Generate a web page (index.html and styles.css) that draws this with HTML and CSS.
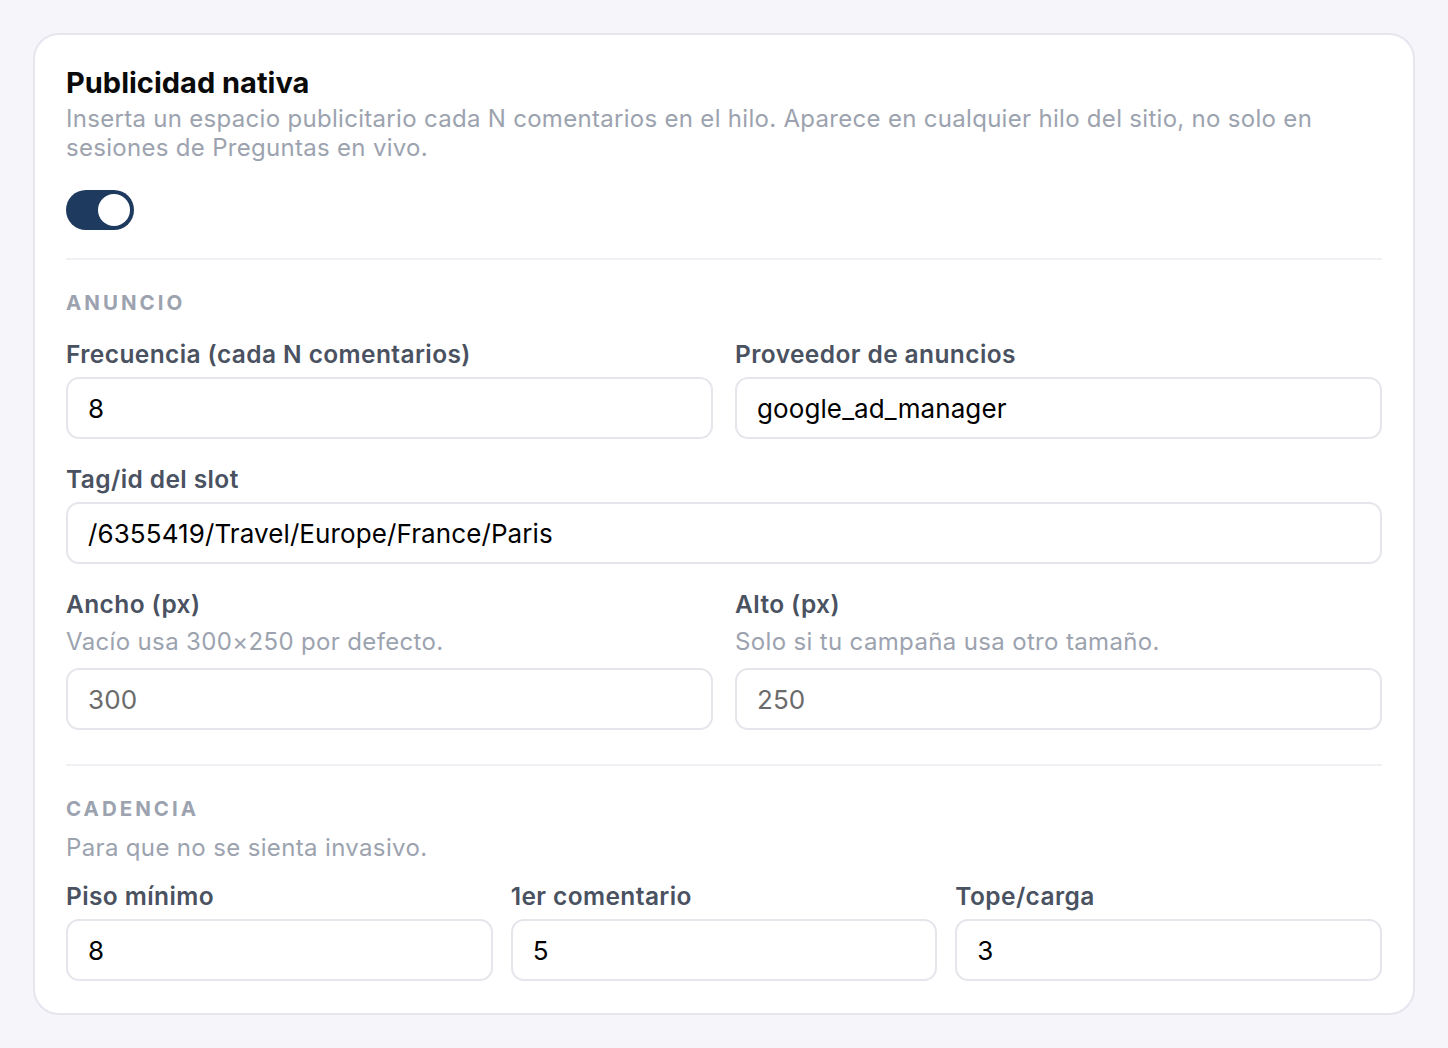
FILE: index.html
```html
<!DOCTYPE html>
<html lang="es">
<head>
<meta charset="utf-8">
<title>Publicidad nativa</title>
<link rel="stylesheet" href="styles.css">
</head>
<body>
<div class="card">
  <h1 class="title">Publicidad nativa</h1>
  <p class="desc">Inserta un espacio publicitario cada N comentarios en el hilo. Aparece en cualquier hilo del sitio, no solo en sesiones de Preguntas en vivo.</p>
  <div class="toggle" role="switch" aria-checked="true"><span class="knob"></span></div>
  <hr class="divider divider-top">

  <h2 class="section">ANUNCIO</h2>
  <div class="grid two">
    <div class="field">
      <label class="label">Frecuencia (cada N comentarios)</label>
      <input class="input" type="text" value="8">
    </div>
    <div class="field">
      <label class="label">Proveedor de anuncios</label>
      <input class="input" type="text" value="google_ad_manager">
    </div>
  </div>
  <div class="field row">
    <label class="label">Tag/id del slot</label>
    <input class="input" type="text" value="/6355419/Travel/Europe/France/Paris">
  </div>
  <div class="grid two row">
    <div class="field">
      <label class="label">Ancho (px)</label>
      <p class="hint">Vacío usa 300×250 por defecto.</p>
      <input class="input" type="text" placeholder="300">
    </div>
    <div class="field">
      <label class="label">Alto (px)</label>
      <p class="hint">Solo si tu campaña usa otro tamaño.</p>
      <input class="input" type="text" placeholder="250">
    </div>
  </div>
  <hr class="divider divider-mid">

  <h2 class="section section-2">CADENCIA</h2>
  <p class="hint section-hint">Para que no se sienta invasivo.</p>
  <div class="grid three">
    <div class="field">
      <label class="label">Piso mínimo</label>
      <input class="input" type="text" value="8">
    </div>
    <div class="field">
      <label class="label">1er comentario</label>
      <input class="input" type="text" value="5">
    </div>
    <div class="field">
      <label class="label">Tope/carga</label>
      <input class="input" type="text" value="3">
    </div>
  </div>
</div>
</body>
</html>
```
FILE: styles.css
```css
* { box-sizing: border-box; }

html, body {
  margin: 0;
  padding: 0;
  background: #f5f5fa;
}

body {
  padding: 33px;
  font-family: Inter, "Noto Sans", "Liberation Sans", sans-serif;
  color: #111;
}

.card {
  width: 1382px;
  background: #ffffff;
  border: 2px solid #e6e7ee;
  border-radius: 26px;
  padding: 31px 31px 32px;
  display: flex;
  flex-direction: column;
}

.card > * { flex-shrink: 0; }

.title {
  margin: 0;
  font-size: 29px;
  line-height: 34px;
  font-weight: 700;
  color: #0a0a0a;
}

.desc {
  margin: 4px 0 0;
  font-size: 24px;
  line-height: 29px;
  letter-spacing: 0.3px;
  color: #9ca3af;
}

.toggle {
  margin-top: 28px;
  width: 68px;
  height: 40px;
  border-radius: 20px;
  background: #1f3a5f;
  display: flex;
  align-items: center;
  justify-content: flex-end;
  padding: 0 4px;
}

.knob {
  width: 32px;
  height: 32px;
  border-radius: 50%;
  background: #ffffff;
}

.divider {
  border: 0;
  height: 2px;
  background: #eff1f5;
  margin: 0;
  width: 100%;
}

.divider-top { margin-top: 28px; }
.divider-mid { margin-top: 34px; }

.section {
  margin: 31px 0 0;
  font-size: 20.5px;
  line-height: 24px;
  font-weight: 700;
  letter-spacing: 3px;
  color: #9ca3af;
}

.section + .grid { margin-top: 24px; }

.section-hint { margin-top: 12px !important; }
.section-hint + .grid { margin-top: 18px; }

.grid {
  display: grid;
}

.grid.two {
  grid-template-columns: 1fr 1fr;
  column-gap: 22px;
}

.grid.three {
  grid-template-columns: 1fr 1fr 1fr;
  column-gap: 18px;
}

.row { margin-top: 25px; }

.field {
  display: flex;
  flex-direction: column;
}

.label {
  padding-top: 0;
  font-size: 24.5px;
  line-height: 30px;
  font-weight: 600;
  letter-spacing: 0.4px;
  color: #4a5261;
}

.hint {
  margin: 8px 0 0;
  font-size: 24px;
  line-height: 30px;
  letter-spacing: 0.35px;
  color: #9ca3af;
}

.input {
  margin-top: 8px;
  height: 62px;
  width: 100%;
  border: 2px solid #e5e6eb;
  border-radius: 13px;
  background: #fff;
  padding: 0 20px;
  font-family: Inter, "Liberation Sans", Arial, sans-serif;
  font-size: 26px;
  letter-spacing: 0.1px;
  color: #000;
  outline: none;
}

.hint + .input { margin-top: 11px; }

.input::placeholder {
  color: #6b6b6b;
  opacity: 1;
}
```
